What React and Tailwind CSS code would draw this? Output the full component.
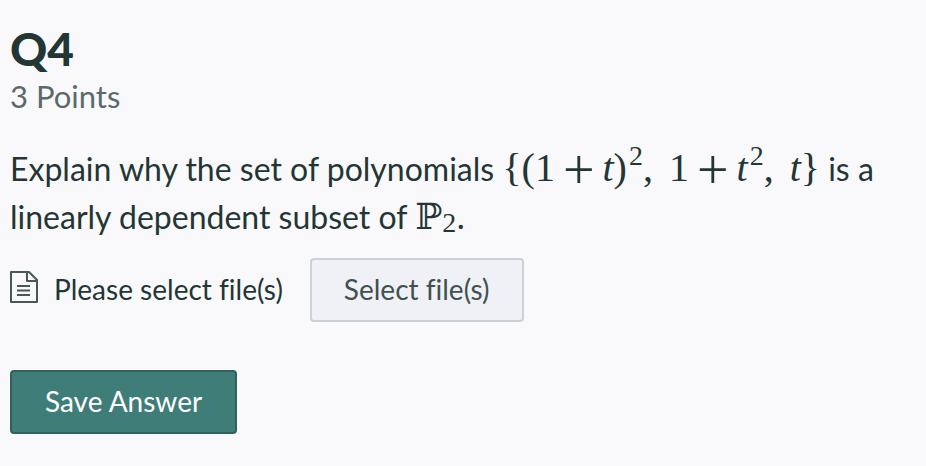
function Sup({ children }) {
  return <sup className="static ml-[2px] align-[16px] text-[28px] leading-none">{children}</sup>;
}

function Plus() {
  return <span className="mx-2 inline-block h-8 align-[-8px] text-[56px] leading-8">+</span>;
}

function FileIcon() {
  return (
    <svg className="mb-[6px] h-8 w-7 shrink-0 text-[#485856]" viewBox="0 0 28 32" fill="none" stroke="currentColor" strokeWidth="2" strokeLinejoin="round" aria-hidden="true">
      <path d="M1 1H19L27 9V31H1Z" />
      <path d="M17 1V10H27" />
      <path d="M7 15H20M7 19.5H20M7 24H20" />
    </svg>
  );
}

export default function App() {
  return (
    <main className="min-h-screen bg-[#f9f9fc] px-[10px] pt-6 font-['Lato',sans-serif] text-[#233634] [font-variant-ligatures:none]">
      <h1 className="text-[46px] leading-[50px] font-black">Q4</h1>
      <p className="text-[31px] leading-[44px] text-[#5b6967]">3 Points</p>

      <p className="mt-6 text-[32px] leading-[48px]">
        Explain why the set of polynomials{' '}
        <span className="font-['Liberation_Serif',serif] text-[40px] leading-none whitespace-nowrap">
          {'{(1'}
          <Plus />
          <i>t</i>)<Sup>2</Sup>
          <span>,</span>
          <span className="ml-4">1</span>
          <Plus />
          <i>t</i>
          <Sup>2</Sup>
          <span>,</span>
          <i className="ml-4">t</i>
          {'}'}
        </span>{' '}
        is a linearly dependent subset of{' '}
        <span className="font-['Liberation_Serif','DejaVu_Serif',serif] text-[36px] leading-none whitespace-nowrap">
          ℙ<sub className="static align-[-3px] text-[28px] leading-none">2</sub>.
        </span>
      </p>

      <div className="mt-[17px] flex items-center">
        <FileIcon />
        <label htmlFor="select-files" className="ml-4 pb-[2px] text-[28px] leading-8">Please select file(s)</label>
        <button id="select-files" type="button" className="ml-[27px] h-16 rounded border-2 border-[#cbd1d8] bg-[#f0f1f6] px-8 pb-[2px] text-[28px] text-[#41514f]">
          Select file(s)
        </button>
      </div>

      <button type="button" className="mt-12 h-16 rounded border-2 border-[#2f625c] bg-[#3f7e78] px-[33px] pb-[2px] text-[28px] text-white">
        Save Answer
      </button>
    </main>
  );
}
